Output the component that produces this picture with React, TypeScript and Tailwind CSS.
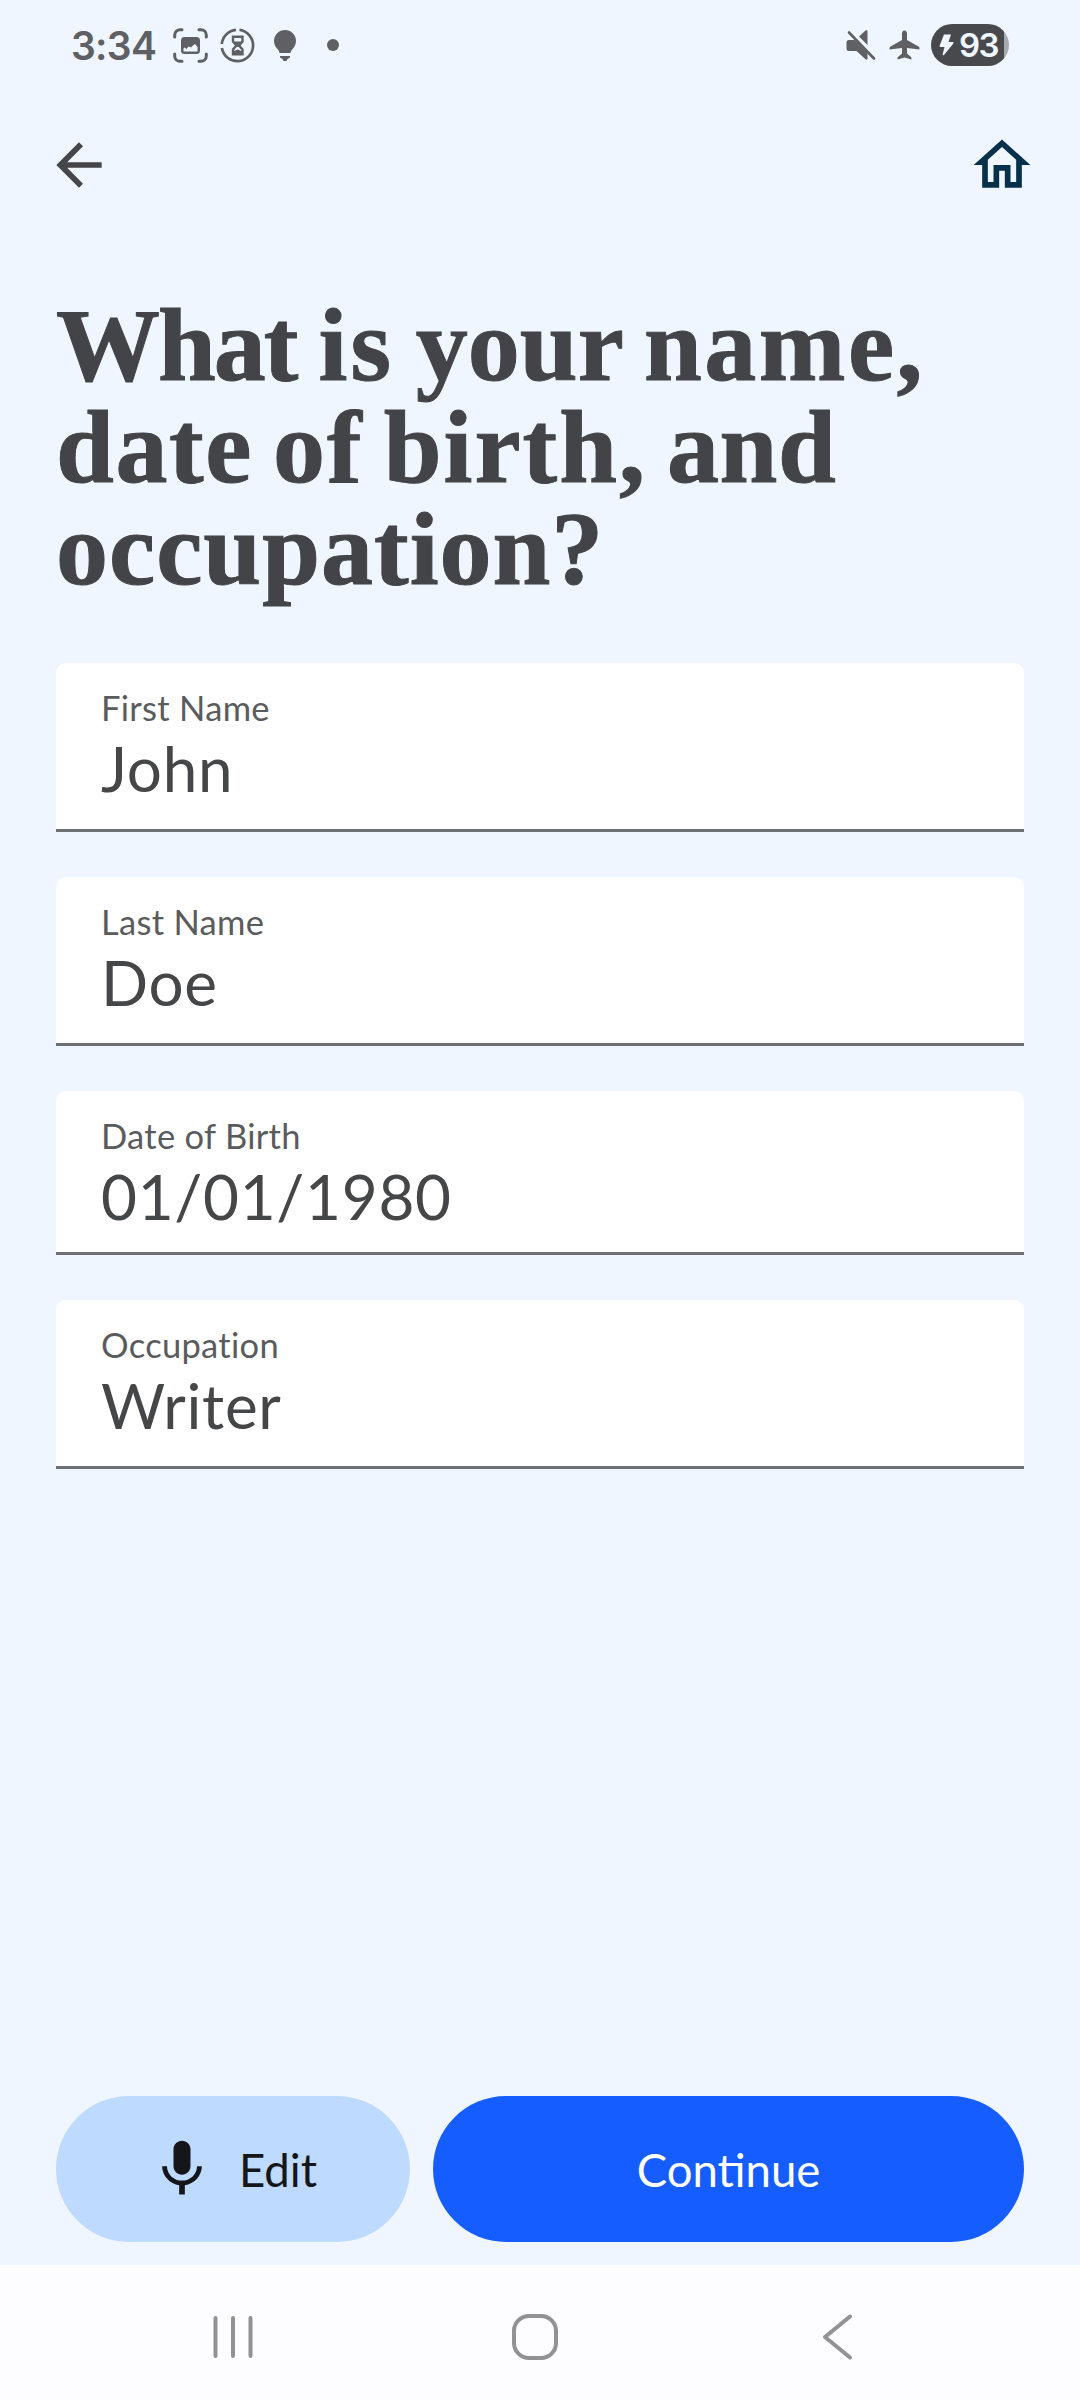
import React from "react";

const fields = [
  { label: "First Name", value: "John", box: "h-[169px]" },
  { label: "Last Name", value: "Doe", box: "h-[169px]" },
  { label: "Date of Birth", value: "01/01/1980", box: "h-[164px]" },
  { label: "Occupation", value: "Writer", box: "h-[169px]" },
];

function StatusBar() {
  return (
    <div className="flex h-[90px] items-center px-[71px] text-[#5f6063]">
      <span className="w-[102px] whitespace-nowrap font-['Inter',sans-serif] text-[39px] font-semibold leading-none tracking-[-0.7px]">3:34</span>
      <svg className="h-[35px] w-[35px]" viewBox="0 0 35 35" fill="none" stroke="currentColor" strokeWidth="3" strokeLinecap="round">
        <path d="M1.7 9V7a5.3 5.3 0 0 1 5.3-5.3h2M26 1.7h2a5.3 5.3 0 0 1 5.3 5.3v2M33.3 26v2a5.3 5.3 0 0 1-5.3 5.3h-2M9 33.3H7A5.3 5.3 0 0 1 1.7 28v-2" />
        <path d="M11.5 9h12a3.5 3.5 0 0 1 3.5 3.5v10a3.5 3.5 0 0 1-3.500 3.500h-12a3.500 3.500 0 0 1-3.500-3.500v-10A3.500 3.500 0 0 1 11.500 9ZM10.500 20.500v3h14V19l-2.500-3-2 1.500-2 2-2.500-1-2 2.500-2-1.500Z" fill="currentColor" fillRule="evenodd" stroke="none" />
      </svg>
      <svg className="ml-[12px] h-[35px] w-[35px]" viewBox="0 0 35 35" fill="none" stroke="currentColor" strokeWidth="2.700">
        <path d="M19.500 1.900A15.700 15.700 0 1 1 1.900 20M1.800 16A15.700 15.700 0 0 1 16 1.800" />
        <path d="M13 8.700h9.500v4.800l-3 3.500v1l3 3.500v4.800H13v-4.800l3-3.500v-1l-3-3.500Z" strokeWidth="2.400" />
        <path d="M13 13.500h9.500l-3 4v1.500h-3v-1.500ZM13 27v-3.500l4.700-2 4.800 2V27Z" fill="currentColor" stroke="none" />
      </svg>
      <svg className="ml-[18px] h-[33px] w-[24px]" viewBox="0 0 24 33" fill="currentColor">
        <path d="M12 1a11 11 0 0 0-11 11c0 4 2.200 6.800 4.200 9 1 1 1 2 1.300 3h11c.3-1 .3-2 1.300-3 2-2.200 4.200-5 4.200-9A11 11 0 0 0 12 1ZM7 27h10v1.500l-2.500 1.500-1 2h-3l-1-2L7 28.500Z" />
      </svg>
      <div className="ml-[30px] h-3 w-3 rounded-full bg-[#5f6063]" />
      <div className="grow" />
      <svg className="h-[31px] w-[31px]" viewBox="0 0 31 31" fill="currentColor">
        <path d="M21.500 1.500v13.500L13 6.500l6.500-6c1-.7 2-.3 2 1ZM8.500 10 21.500 23v5.500c0 1.200-1 1.500-2 .7L10.500 21H3a2.500 2.500 0 0 1-2.500-2.500v-6A2.500 2.500 0 0 1 3 10Z" />
        <path d="m3 2.500 25 26" stroke="currentColor" strokeWidth="2.600" strokeLinecap="round" />
      </svg>
      <svg className="ml-[12px] h-[31px] w-[31px]" viewBox="0 0 31 31" fill="currentColor">
        <path d="M15.500.5c-1.700 0-2.500 1.500-2.500 3V10L1.500 16.500c-1 .6-1 1.300-1 3L13 18v5.500l-4 3.500c-.6.500-.5 1.300-.5 2.500l7-2 7 2c0-1.200.1-2-.5-2.500l-4-3.500V18l12.500 1.500c0-1.700 0-2.400-1-3L18 10V3.500c0-1.500-.8-3-2.500-3Z" />
      </svg>
      <div className="ml-[11px] flex h-[42px] w-[78px] items-center overflow-hidden rounded-full bg-[linear-gradient(90deg,#48494c_73px,#a6aaaf_73px)] pl-[8px] text-[#eff6ff]">
        <svg className="h-[22px] w-[15px] shrink-0" viewBox="0 0 15 22" fill="currentColor">
          <path d="M5 .5h7L9.500 8H14q1 .5.4 1.500L5 21q-1.500.8-1.300-.8L5.500 13H1.500Q.3 12.700.7 11.500Z" />
        </svg>
        <span className="ml-[5px] font-['Inter',sans-serif] text-[33px] font-semibold leading-none tracking-[-1.500px]">93</span>
      </div>
    </div>
  );
}

function Field({ f }: { f: (typeof fields)[number] }) {
  return (
    <div className={`${f.box} rounded-t-[10px] border-b-[3px] border-[#6f7073] bg-white pl-[45px] pt-[23px] text-[#454648]`}>
      <div className="h-[44px] text-[34.500px] leading-[44px] tracking-[0.300px] text-[#5a5b5d]">{f.label}</div>
      <div className="h-[76px] text-[62px] leading-[76px] tracking-[0.700px]">{f.value}</div>
    </div>
  );
}

export default function App() {
  return (
    <div className="flex h-[2400px] w-[1080px] flex-col overflow-hidden bg-[#eff6ff] font-['Lato',sans-serif]">
      <StatusBar />
      <header className="mt-[41px] flex h-[68px] items-center justify-between pl-[45px] pr-[44px]">
        <svg className="h-[68px] w-[68px] text-[#454649]" viewBox="0 0 24 24" fill="currentColor">
          <path d="M20 11H7.830l5.590-5.590L12 4l-8 8 8 8 1.410-1.410L7.830 13H20v-2z" />
        </svg>
        <svg className="h-[68px] w-[68px] text-[#07304b]" viewBox="0 0 24 24" fill="currentColor">
          <path d="m12 5.690 5 4.500V18h-2v-6H9v6H7v-7.810l5-4.500M12 3 2 12h3v8h6v-6h2v6h6v-8h3L12 3z" />
        </svg>
      </header>
      <h1 className="mt-[95px] h-[306px] whitespace-nowrap pl-[56px] font-['Liberation_Serif',serif] text-[104px] font-bold leading-[102px] text-[#434448] [-webkit-text-stroke:1px_#434448]">
        <div className="h-[102px] [word-spacing:-4px]">
          <span className="tracking-[-2px]">What</span> <span className="tracking-[3px]">is</span> your <span className="tracking-[2.500px]">name,</span>
        </div>
        <div className="h-[102px] [word-spacing:-6px]">
          <span className="tracking-[1.600px]">date</span> <span className="tracking-[2px]">of</span> <span className="tracking-[2px]">birth,</span> <span className="tracking-[0.500px]">and</span>
        </div>
        <div className="h-[102px] tracking-[1px]">occupation?</div>
      </h1>
      <main className="mt-[63px] flex flex-col gap-[45px] px-[56px]">
        {fields.map((f) => (
          <Field key={f.label} f={f} />
        ))}
      </main>
      <div className="mt-auto flex h-[146px] shrink-0 gap-[23px] px-[56px] text-[45.500px]">
        <button className="flex w-[354px] items-center rounded-full bg-[#bedaff] pl-[92px] text-[#151619]">
          <svg className="h-[68px] w-[68px]" viewBox="0 0 24 24" fill="currentColor">
            <path d="M12 14c1.660 0 2.990-1.340 2.990-3L15 5c0-1.660-1.340-3-3-3S9 3.340 9 5v6c0 1.660 1.340 3 3 3zm5.300-3c0 3-2.540 5.100-5.300 5.100S6.700 14 6.700 11H5c0 3.410 2.720 6.230 6 6.720V21h2v-3.280c3.280-.48 6-3.300 6-6.720h-1.700z" />
          </svg>
          <span className="ml-[23px] pt-[2px]">Edit</span>
        </button>
        <button className="flex grow items-center justify-center rounded-full bg-[#155dff] pt-[2px] text-white">Continue</button>
      </div>
      <nav className="mt-[23px] flex h-[135px] shrink-0 items-center bg-[#fdfdff] pl-[212px] pt-[8px] text-[#929294]">
        <svg className="h-[48px] w-[42px]" viewBox="0 0 42 48" stroke="currentColor" strokeWidth="4" strokeLinecap="round">
          <path d="M3.500 5v38M21 5v38M38.500 5v38" />
        </svg>
        <svg className="ml-[257px] h-[48px] w-[48px]" viewBox="0 0 48 48" fill="none" stroke="currentColor" strokeWidth="4">
          <rect x="3" y="3" width="42" height="42" rx="15" />
        </svg>
        <svg className="ml-[262px] h-[48px] w-[34px]" viewBox="0 0 34 48" fill="none" stroke="currentColor" strokeWidth="4" strokeLinecap="round" strokeLinejoin="round">
          <path d="M29 3.500 4 24l25 20.500" />
        </svg>
      </nav>
    </div>
  );
}
